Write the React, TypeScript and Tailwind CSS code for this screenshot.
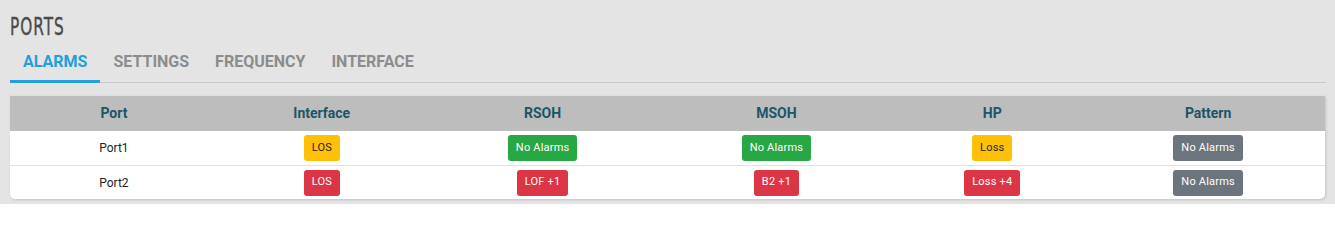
const columns = [
  { label: "Port", width: "w-[208px]" },
  { label: "Interface", width: "w-[208px]" },
  { label: "RSOH", width: "w-[234px]" },
  { label: "MSOH", width: "w-[234px]" },
  { label: "HP", width: "w-[198px]" },
  { label: "Pattern", width: "w-[234px]" },
]

type Tone = "yellow" | "red" | "green" | "gray"

const toneClass: Record<Tone, string> = {
  yellow: "bg-[#ffc107] text-[#212529]",
  red: "bg-[#dc3545] text-white",
  green: "bg-[#28a745] text-white",
  gray: "bg-[#6c757d] text-white",
}

const rows: { port: string; cells: { text: string; tone: Tone }[] }[] = [
  {
    port: "Port1",
    cells: [
      { text: "LOS", tone: "yellow" },
      { text: "No Alarms", tone: "green" },
      { text: "No Alarms", tone: "green" },
      { text: "Loss", tone: "yellow" },
      { text: "No Alarms", tone: "gray" },
    ],
  },
  {
    port: "Port2",
    cells: [
      { text: "LOS", tone: "red" },
      { text: "LOF +1", tone: "red" },
      { text: "B2 +1", tone: "red" },
      { text: "Loss +4", tone: "red" },
      { text: "No Alarms", tone: "gray" },
    ],
  },
]

const tabs = ["ALARMS", "SETTINGS", "FREQUENCY", "INTERFACE"]

function Badge({ text, tone }: { text: string; tone: Tone }) {
  return (
    <span
      className={`inline-flex h-[26px] items-center rounded-[3px] px-[8px] text-[11px] tracking-[0.2px] ${toneClass[tone]}`}
    >
      {text}
    </span>
  )
}

export default function App() {
  return (
    <div className="h-[204px] w-[1335px] bg-[#efefef] font-['Roboto',sans-serif]">
      <div className="h-[204px] rounded-[4px] bg-[#e4e4e4] px-[10px] pt-[13px] shadow-[0_0_3px_rgba(0,0,0,0.12)]">
        {/* Title */}
        <div className="h-[27px]">
          <h2 className="inline-block origin-left scale-x-[0.68] font-['DejaVu_Sans_Condensed','DejaVu_Sans',sans-serif] text-[25px] leading-[27px] tracking-[1.5px] text-[#4a4a4a] [-webkit-text-stroke:0.4px_#4a4a4a]">
            PORTS
          </h2>
        </div>

        {/* Tabs */}
        <div className="mr-[-1px] flex border-b border-[#c9c9c9]">
          {tabs.map((tab, i) => (
            <div
              key={tab}
              className={`relative px-[13px] pt-[12px] pb-[11px] text-[16px] font-bold leading-[19px] ${
                i === 0 ? "text-[#239fdb]" : "text-[#8c8c8c]"
              }`}
            >
              {tab}
              {i === 0 && <div className="absolute bottom-[-1px] left-0 right-0 h-[3px] bg-[#239fdb]" />}
            </div>
          ))}
        </div>

        {/* Table */}
        <div className="mt-[13px] w-[1315px] overflow-hidden rounded-b-[5px] bg-white shadow-[1px_1px_3px_rgba(0,0,0,0.15)]">
          <div className="flex h-[35px] items-center bg-[#bdbdbd]">
            {columns.map((col) => (
              <div key={col.label} className={`${col.width} text-center text-[14px] font-bold text-[#1b5567]`}>
                {col.label}
              </div>
            ))}
          </div>
          {rows.map((row, r) => (
            <div
              key={row.port}
              className={`flex h-[34px] items-center ${r > 0 ? "border-t border-[#e2e2e2]" : ""}`}
            >
              <div className="w-[208px] text-center text-[12px] text-[#222]">{row.port}</div>
              {row.cells.map((cell, c) => (
                <div key={c} className={`${columns[c + 1].width} flex justify-center`}>
                  <Badge text={cell.text} tone={cell.tone} />
                </div>
              ))}
            </div>
          ))}
        </div>
      </div>
    </div>
  )
}
